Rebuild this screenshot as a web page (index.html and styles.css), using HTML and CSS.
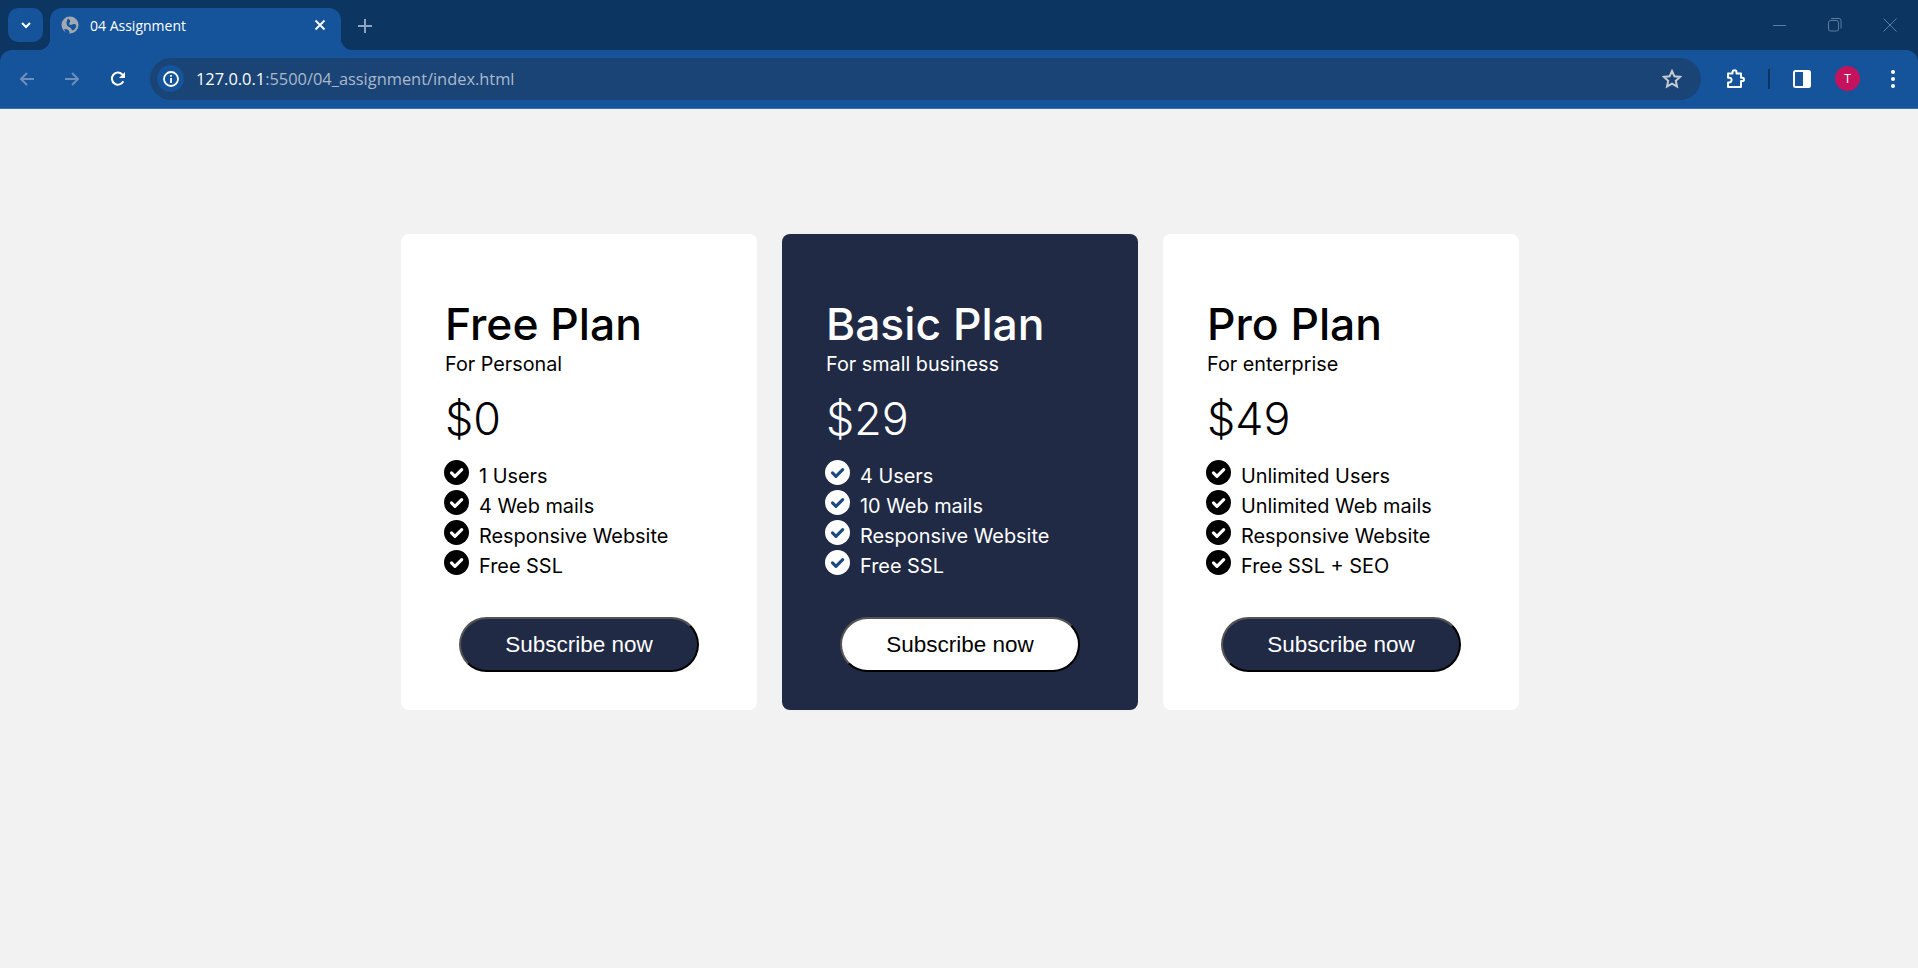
FILE: index.html
```html
<!DOCTYPE html>
<html lang="en">
<head>
    <meta charset="UTF-8">
    <meta name="viewport" content="width=device-width, initial-scale=1.0">
    <title>04 Assignment</title>
    <link rel="stylesheet" href="styles.css">
</head>
<body>
    <svg class="icon-defs" width="0" height="0">
        <symbol id="check-circle" viewBox="0 0 24 24">
            <circle class="check-disc" cx="12" cy="12" r="12"></circle>
            <path class="check-mark" d="M7.200 12.400l3.300 3.300 6.500-6.500"></path>
        </symbol>
    </svg>

    <header class="browser">
        <div class="tab-strip">
            <button class="tab-search">
                <svg width="12" height="12" viewBox="0 0 12 12"><path d="M2 4l4 4 4-4" fill="none" stroke="#fff" stroke-width="2"/></svg>
            </button>
            <div class="tab">
                <svg class="favicon" width="18" height="18" viewBox="0 0 18 18">
                    <circle cx="9" cy="9" r="8.5" fill="#a3a9b2"/>
                    <path d="M3 13.5c2-1 2.500-.5 4 .5 1.500 1 2 2.500 1 3.500-2 .2-4-1.500-5-4zM7 2.500c2 1.500 3 2.500 1.500 4.500-1.200 1.500.5 2.500 2.500 1.500 2-1 3.500-.5 4 .5.800 2-1 4.500-3 5.500-1.500-.5-1.500-2-3-3-2-1-3.500-2-3.500-4s.5-3.500 1.500-5z" fill="#15539a"/>
                </svg>
                <span class="tab-title">04 Assignment</span>
                <svg class="tab-close" width="12" height="12" viewBox="0 0 12 12"><path d="M1.500 1.500l9 9M10.500 1.500l-9 9" stroke="#fff" stroke-width="1.800"/></svg>
            </div>
            <svg class="new-tab" width="14" height="14" viewBox="0 0 14 14"><path d="M7 0v14M0 7h14" stroke="#8ea4bf" stroke-width="2"/></svg>
            <div class="window-controls">
                <svg width="14" height="14" viewBox="0 0 14 14"><path d="M0 7.500h13" stroke="#5f7d9f" stroke-width="1"/></svg>
                <svg width="14" height="14" viewBox="0 0 14 14"><rect x=".5" y="2.500" width="10" height="10.500" rx="2" fill="none" stroke="#5f7d9f"/><path d="M3 .5h8a2 2 0 0 1 2 2v8" fill="none" stroke="#5f7d9f"/></svg>
                <svg width="14" height="14" viewBox="0 0 14 14"><path d="M.5.5l13 13M13.500.5l-13 13" stroke="#5f7d9f" stroke-width="1"/></svg>
            </div>
        </div>
        <div class="toolbar">
            <svg class="nav-icon" width="16" height="16" viewBox="0 0 16 16"><path d="M15 8H2M8 2L2 8l6 6" fill="none" stroke="#6c90bb" stroke-width="2"/></svg>
            <svg class="nav-icon" width="16" height="16" viewBox="0 0 16 16"><path d="M1 8h13M8 2l6 6-6 6" fill="none" stroke="#6c90bb" stroke-width="2"/></svg>
            <svg class="nav-icon" width="16" height="16" viewBox="0 0 16 16"><path d="M13.300 10.300A6 6 0 1 1 12.300 3.500L14 5" fill="none" stroke="#fff" stroke-width="2"/><path d="M15 1v6H9z" fill="#fff"/></svg>
            <div class="omnibox">
                <span class="site-info">
                    <svg width="16" height="16" viewBox="0 0 16 16"><circle cx="8" cy="8" r="7" fill="none" stroke="#fff" stroke-width="1.800"/><path d="M8 7v5M8 4v1.800" stroke="#fff" stroke-width="1.800"/></svg>
                </span>
                <span class="url"><span class="url-host">127.0.0.1</span>:5500/04_assignment/index.html</span>
                <svg class="star" width="20" height="20" viewBox="0 0 20 20"><path d="M10 2l2.400 5.300 5.700.6-4.300 3.900 1.200 5.700-5-2.900-5 2.900 1.200-5.700L1.900 7.900l5.700-.6z" fill="none" stroke="#c6ccd4" stroke-width="2"/></svg>
            </div>
            <svg class="ext-icon" width="20" height="20" viewBox="0 0 20 20"><path d="M2 4.500h4.500V3.200a2 2 0 0 1 4 0v1.300H15v4.200h1.300a1.700 1.700 0 0 1 0 3.400H15V18H2v-4.500h1.200a2 2 0 0 0 0-4.800H2z" fill="none" stroke="#fff" stroke-width="2" stroke-linejoin="round"/></svg>
            <span class="toolbar-divider"></span>
            <svg class="panel-icon" width="18" height="18" viewBox="0 0 18 18"><rect x="1" y="1" width="16" height="16" rx="1.500" fill="none" stroke="#fff" stroke-width="2"/><rect x="10" y="1" width="7" height="16" fill="#fff"/></svg>
            <span class="avatar">T</span>
            <svg class="menu-icon" width="4" height="18" viewBox="0 0 4 18"><circle cx="2" cy="2" r="2" fill="#fff"/><circle cx="2" cy="9" r="2" fill="#fff"/><circle cx="2" cy="16" r="2" fill="#fff"/></svg>
        </div>
    </header>

    <main class="pricing">
        <section class="card">
            <h1>Free Plan</h1>
            <p class="for">For Personal</p>
            <p class="price">$0</p>
            <ul class="features">
                <li><svg class="check"><use href="#check-circle"></use></svg>1 Users</li>
                <li><svg class="check"><use href="#check-circle"></use></svg>4 Web mails</li>
                <li><svg class="check"><use href="#check-circle"></use></svg>Responsive Website</li>
                <li><svg class="check"><use href="#check-circle"></use></svg>Free SSL</li>
            </ul>
            <button class="subscribe">Subscribe now</button>
        </section>

        <section class="card card-dark">
            <h1>Basic Plan</h1>
            <p class="for">For small business</p>
            <p class="price">$29</p>
            <ul class="features">
                <li><svg class="check"><use href="#check-circle"></use></svg>4 Users</li>
                <li><svg class="check"><use href="#check-circle"></use></svg>10 Web mails</li>
                <li><svg class="check"><use href="#check-circle"></use></svg>Responsive Website</li>
                <li><svg class="check"><use href="#check-circle"></use></svg>Free SSL</li>
            </ul>
            <button class="subscribe">Subscribe now</button>
        </section>

        <section class="card">
            <h1>Pro Plan</h1>
            <p class="for">For enterprise</p>
            <p class="price">$49</p>
            <ul class="features">
                <li><svg class="check"><use href="#check-circle"></use></svg>Unlimited Users</li>
                <li><svg class="check"><use href="#check-circle"></use></svg>Unlimited Web mails</li>
                <li><svg class="check"><use href="#check-circle"></use></svg>Responsive Website</li>
                <li><svg class="check"><use href="#check-circle"></use></svg>Free SSL + SEO</li>
            </ul>
            <button class="subscribe">Subscribe now</button>
        </section>
    </main>
</body>
</html>
```

FILE: styles.css
```css
* {
    margin: 0;
    padding: 0;
    box-sizing: border-box;
}

body {
    font-family: 'Inter', sans-serif;
    background: #f2f2f2;
    height: 968px;
    overflow: hidden;
}

.icon-defs {
    display: block;
    height: 0;
}

/* browser chrome */
.browser {
    background: #0c3562;
    font-family: 'Open Sans', 'Noto Sans', sans-serif;
}

.tab-strip {
    display: flex;
    align-items: flex-start;
    height: 50px;
    padding: 8px 0 0 8px;
}

.tab-search {
    display: flex;
    align-items: center;
    justify-content: center;
    width: 35px;
    height: 34px;
    background: #15539a;
    border: none;
    border-radius: 10px;
}

.tab {
    position: relative;
    display: flex;
    align-items: center;
    width: 291px;
    height: 42px;
    margin-left: 7px;
    padding: 0 15px 8px 11px;
    background: #15539a;
    border-radius: 12px 12px 0 0;
    color: #fff;
}

.tab::before,
.tab::after {
    content: '';
    position: absolute;
    bottom: 0;
    width: 12px;
    height: 12px;
}

.tab::before {
    left: -12px;
    background: radial-gradient(circle at 0 0, transparent 12px, #15539a 12.5px);
}

.tab::after {
    right: -12px;
    background: radial-gradient(circle at 100% 0, transparent 12px, #15539a 12.5px);
}

.favicon {
    flex: none;
}

.tab-title {
    flex: 1;
    margin-left: 11px;
    font-size: 14px;
}

.new-tab {
    margin: 11px 0 0 17px;
}

.window-controls {
    display: flex;
    gap: 41px;
    margin: 10px 0 0 auto;
    padding-right: 21px;
}

.toolbar {
    display: flex;
    align-items: center;
    height: 59px;
    padding: 0 0 1px 19px;
    background: #15539a;
    border-radius: 12px 12px 0 0;
    border-bottom: 1px solid #3a70ad;
}

.nav-icon {
    flex: none;
    margin-right: 29px;
}

.nav-icon:nth-child(3) {
    margin-left: 1px;
}

.omnibox {
    display: flex;
    align-items: center;
    width: 1551px;
    height: 42px;
    margin-left: -5px;
    padding: 0 19px 0 7px;
    background: #1b4476;
    border-radius: 21px;
}

.site-info {
    display: flex;
    align-items: center;
    justify-content: center;
    width: 27px;
    height: 27px;
    background: #15539a;
    border-radius: 50%;
}

.url {
    flex: 1;
    margin-left: 12px;
    font-size: 16.4px;
    color: #a9b9cd;
}

.url-host {
    color: #fff;
}

.ext-icon {
    flex: none;
    margin-left: 25px;
}

.toolbar-divider {
    width: 2px;
    height: 20px;
    margin-left: 22px;
    background: #0c3562;
}

.panel-icon {
    flex: none;
    margin-left: 23px;
}

.avatar {
    display: flex;
    align-items: center;
    justify-content: center;
    flex: none;
    width: 25px;
    height: 25px;
    margin-left: 24px;
    background: #c4135c;
    border-radius: 50%;
    color: #fff;
    font-size: 12px;
}

.menu-icon {
    flex: none;
    margin-left: 31px;
}

/* pricing cards */
.pricing {
    display: flex;
    justify-content: center;
    gap: 25px;
    padding: 125px 0 0 2px;
}

.card {
    --disc: #000;
    --mark: #fff;
    width: 356px;
    height: 476px;
    padding: 63px 44px 0;
    background: #fff;
    border-radius: 8px;
    color: #000;
}

.card-dark {
    --disc: #fff;
    --mark: #1c4a80;
    background: #212a44;
    color: #fff;
}

.card h1 {
    margin-bottom: 1px;
    font-size: 44.4px;
    line-height: 54px;
    font-weight: 500;
}

.for {
    font-size: 19.8px;
    line-height: 24px;
}

.price {
    margin-top: 14px;
    font-size: 44.8px;
    line-height: 58px;
    font-weight: 300;
}

.features {
    margin-top: 12px;
    list-style: none;
}

.features li {
    display: flex;
    align-items: flex-start;
    height: 30px;
    font-size: 19.9px;
    line-height: 32px;
}

.check {
    flex: none;
    width: 25px;
    height: 25px;
    margin: 0 10px 0 -1px;
}

.check-disc {
    fill: var(--disc);
}

.check-mark {
    fill: none;
    stroke: var(--mark);
    stroke-width: 3;
    stroke-linecap: round;
    stroke-linejoin: round;
}

.subscribe {
    display: block;
    width: 240px;
    height: 55px;
    margin: 37px auto 0;
    background: #212a44;
    border: 2px outset #000;
    border-radius: 28px;
    color: #fff;
    font-family: 'Liberation Sans', sans-serif;
    font-size: 22.5px;
}

.card-dark .subscribe {
    background: #fff;
    color: #000;
}
```
